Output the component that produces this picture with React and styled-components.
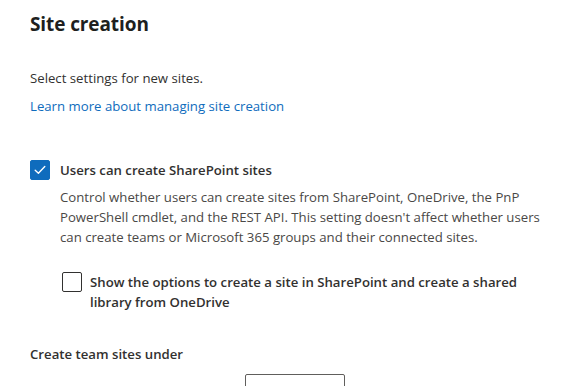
import React from "react";
import styled, { createGlobalStyle } from "styled-components";

const Global = createGlobalStyle`
  html, body { margin: 0; padding: 0; background: #ffffff; }
  body { font-family: "Segoe UI", "Open Sans", "Liberation Sans", sans-serif; color: #323130; overflow: hidden; }
`;

const Page = styled.div`
  width: 564px;
  height: 386px;
  overflow: hidden;
  padding: 10px 8px 0 30px;
  box-sizing: border-box;
`;

const Title = styled.h1`
  margin: 0;
  font-size: 19px;
  line-height: 28px;
  font-weight: 700;
  letter-spacing: -0.1px;
  color: #201f1e;
`;

const Text = styled.p`
  margin: ${(p) => p.$mt || 0}px 0 0 0;
  font-size: 13.2px;
  line-height: 20px;
  color: ${(p) => (p.$muted ? "#4a4846" : "#323130")};
`;

const Link = styled.a`
  display: block;
  margin-top: 8px;
  font-size: 13.2px;
  line-height: 20px;
  color: #0f6cbd;
  text-decoration: none;
`;

const Option = styled.div`
  display: flex;
  align-items: flex-start;
  gap: ${(p) => p.$gap || 10}px;
  margin: ${(p) => p.$mt}px 0 0 ${(p) => p.$indent || 0}px;
`;

const Box = styled.span`
  flex: none;
  width: 20px;
  height: 20px;
  box-sizing: border-box;
  border-radius: 2px;
  display: flex;
  align-items: center;
  justify-content: center;
  background: ${(p) => (p.$checked ? "#0f6cbd" : "#ffffff")};
  border: 1px solid ${(p) => (p.$checked ? "#0f6cbd" : "#323130")};
`;

const OptionBody = styled.div`
  display: flex;
  flex-direction: column;
`;

const Label = styled.span`
  font-size: 13.2px;
  line-height: 20px;
  font-weight: 600;
  color: #323130;
`;

const LabelWrap = styled(Label)`
  max-width: 466px;
`;

const FieldLabel = styled.div`
  margin-top: 32px;
  font-size: 13.2px;
  line-height: 20px;
  font-weight: 600;
  color: #323130;
`;

const InputRow = styled.div`
  margin-top: 10px;
  padding-left: 215px;
`;

const Input = styled.div`
  width: 100px;
  height: 32px;
  box-sizing: border-box;
  border: 1px solid #605e5c;
  border-radius: 2px;
  font-size: 13.2px;
  line-height: 30px;
  padding-left: 8px;
  color: #323130;
`;

const Check = () => (
  <svg width="12" height="10" viewBox="0 0 12 10" fill="none">
    <path d="M1.2 5.2 L4.4 8.2 L10.8 1.6" stroke="#ffffff" strokeWidth="1.4" strokeLinecap="round" strokeLinejoin="round" />
  </svg>
);

export default function App() {
  return (
    <Page>
      <Global />
      <Title>Site creation</Title>
      <Text $mt={30}>Select settings for new sites.</Text>
      <Link href="#">Learn more about managing site creation</Link>
      <Option $mt={44}>
        <Box $checked><Check /></Box>
        <OptionBody>
          <Label>Users can create SharePoint sites</Label>
          <Text $muted $mt={7}>
            Control whether users can create sites from SharePoint, OneDrive, the PnP PowerShell cmdlet, and the REST API. This setting doesn't affect whether users can create teams or Microsoft 365 groups and their connected sites.
          </Text>
        </OptionBody>
      </Option>
      <Option $mt={25} $indent={32} $gap={8}>
        <Box />
        <LabelWrap>Show the options to create a site in SharePoint and create a shared library from OneDrive</LabelWrap>
      </Option>
      <FieldLabel>Create team sites under</FieldLabel>
      <InputRow>
        <Input>sites/</Input>
      </InputRow>
    </Page>
  );
}
